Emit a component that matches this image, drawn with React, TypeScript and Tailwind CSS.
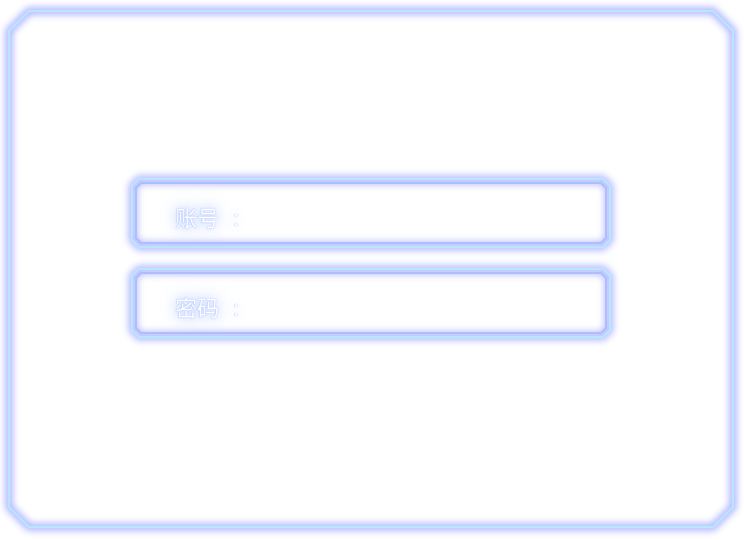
import React from 'react';

type FrameProps = { id: string; w: number; h: number; cut: number; inner?: boolean };

// neon octagon outline, drawn behind the content of its box
function NeonFrame({ id, w, h, cut, inner }: FrameProps) {
  const oct = (o: number, c: number) => {
    const x0 = o, y0 = o, x1 = w - o, y1 = h - o;
    return `${x0 + c},${y0} ${x1 - c},${y0} ${x1},${y0 + c} ${x1},${y1 - c} ${x1 - c},${y1} ${x0 + c},${y1} ${x0},${y1 - c} ${x0},${y0 + c}`;
  };
  return (
    <svg
      width={w}
      height={h}
      viewBox={`0 0 ${w} ${h}`}
      className="pointer-events-none absolute left-0 top-0 overflow-visible"
    >
      <defs>
        <filter id={id} filterUnits="userSpaceOnUse" x={-30} y={-30} width={w + 60} height={h + 60}>
          <feGaussianBlur stdDeviation="3.5" />
        </filter>
      </defs>
      <polygon points={oct(1, cut)} fill="none" stroke="#7784ff" strokeWidth="7" opacity={inner ? 0.55 : 0.65} filter={`url(#${id})`} />
      {inner && (
        <polygon points={oct(5, cut - 2)} fill="none" stroke="#7784ff" strokeWidth="4" opacity="0.35" filter={`url(#${id})`} />
      )}
      <polygon points={oct(1, cut)} fill="none" stroke="#b8e6ff" strokeWidth="2" />
      {inner && <polygon points={oct(5, cut - 2)} fill="none" stroke="#aebdff" strokeWidth="2" />}
    </svg>
  );
}

const fields = [
  { id: 'user', label: '账号' },
  { id: 'pass', label: '密码' },
];

export default function App() {
  return (
    <div className="h-[540px] w-[744px] overflow-hidden bg-white pl-[8px] pt-[10px] font-['Noto_Sans_CJK_SC',sans-serif]">
      <div className="relative flex h-[518px] w-[726px] flex-col items-center gap-[20px] pt-[168px]">
        <NeonFrame id="outer" w={726} h={518} cut={20} />
        {fields.map((f) => (
          <div key={f.id} className="relative flex h-[70px] w-[480px] items-center pl-[44px] pt-[6px]">
            <NeonFrame id={`f-${f.id}`} w={480} h={70} cut={7} inner />
            <span className="relative text-[22px] leading-none text-white [text-shadow:0_0_1px_rgba(110,140,255,0.9),0_0_12px_#b4c8ff,0_0_24px_#c4d4ff]">
              {f.label}
              <span className="ml-[14px]">:</span>
            </span>
          </div>
        ))}
      </div>
    </div>
  );
}
